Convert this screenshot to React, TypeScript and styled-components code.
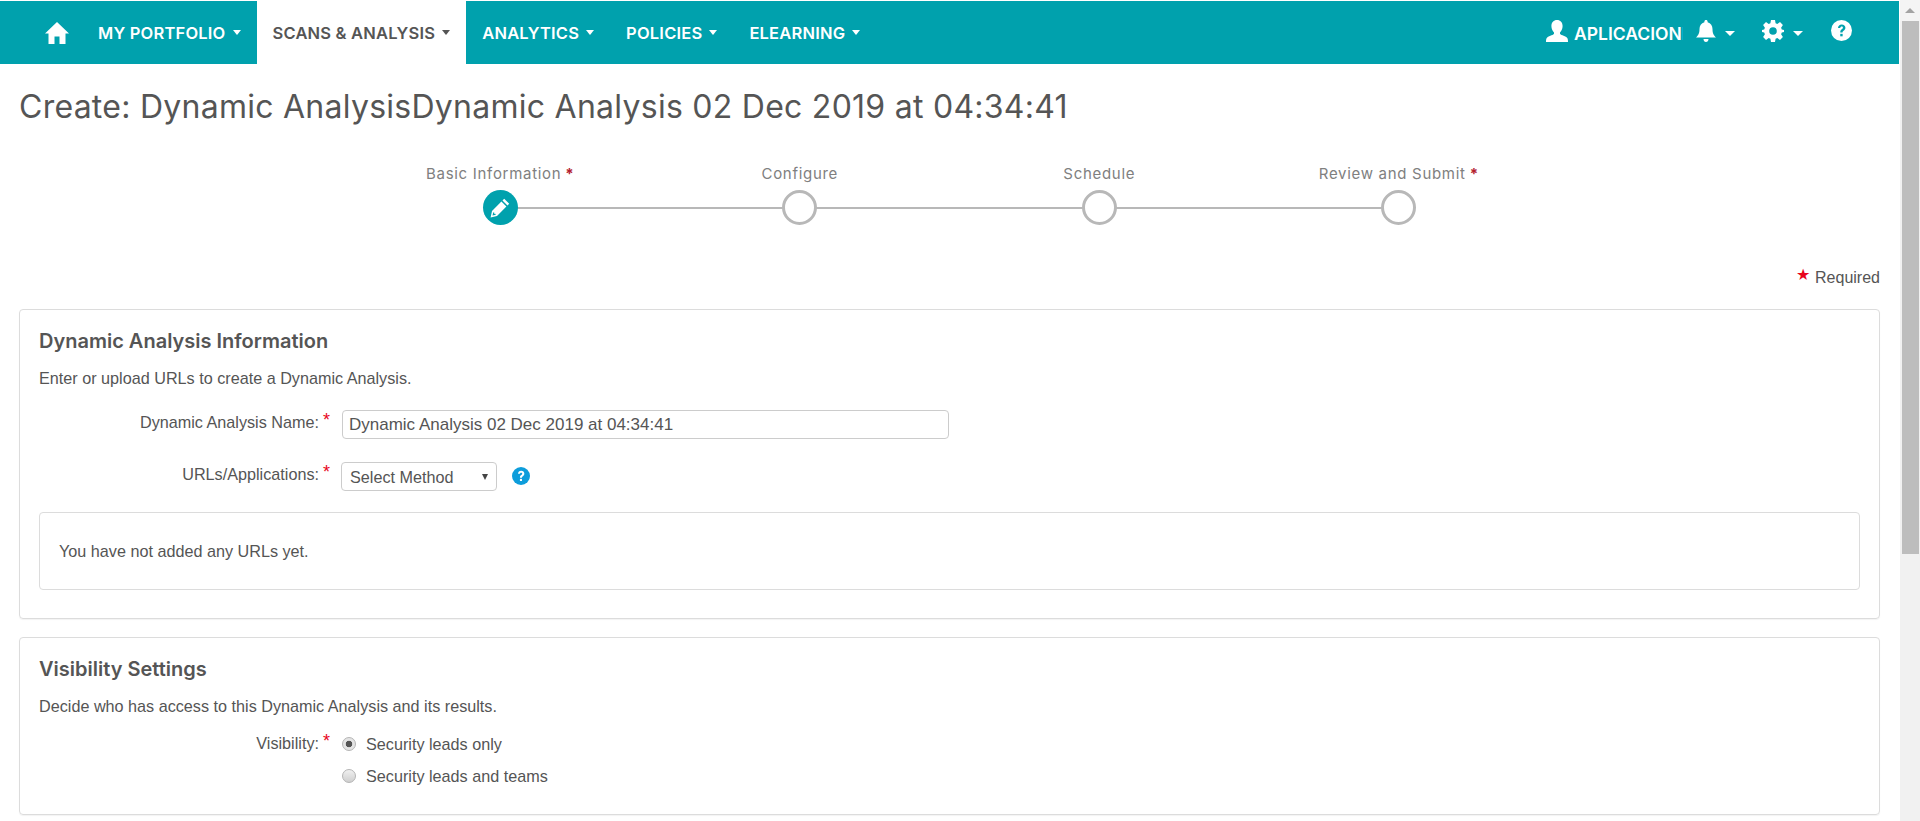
import React from "react";
import styled, { createGlobalStyle } from "styled-components";

const Global = createGlobalStyle`
  html, body { margin: 0; padding: 0; height: 821px; overflow: hidden; background: #fff; }
  body { font-family: "Liberation Sans", Arial, sans-serif; color: #555; font-size: 16px; }
  * { box-sizing: border-box; }
`;

const Shell = styled.div`
  display: flex;
  width: 1920px;
  height: 821px;
  overflow: hidden;
`;
const Page = styled.div`
  width: 1900px;
  flex: none;
  padding-top: 1px;
`;
const Scrollbar = styled.div`
  width: 20px;
  flex: none;
  background: #f1f1f1;
  display: flex;
  flex-direction: column;
  align-items: center;
`;
const ScrollArrow = styled.div`
  height: 21px;
  width: 100%;
  display: flex;
  align-items: center;
  justify-content: center;
  background: #f4f4f4;
  &::before {
    content: "";
    border-left: 5px solid transparent;
    border-right: 5px solid transparent;
    border-bottom: 5px solid #a3a3a3;
  }
`;
const ScrollThumb = styled.div`
  width: 17px;
  height: 533px;
  background: #bdbdbd;
`;

const Nav = styled.nav`
  height: 63px;
  margin-right: 1px;
  background: #00a1ad;
  display: flex;
  align-items: stretch;
  padding-left: 29px;
  color: #fff;
`;
const NavHome = styled.a`
  display: flex;
  align-items: center;
  padding: 0 13px 0 16px;
  color: #fff;
`;
const NavItem = styled.a<{ $active?: boolean }>`
  display: flex;
  align-items: center;
  padding: 0 16px;
  font-family: Inter, "Liberation Sans", sans-serif;
  font-weight: 600;
  font-size: 16.5px;
  letter-spacing: 0.2px;
  text-transform: uppercase;
  white-space: nowrap;
  color: ${(p) => (p.$active ? "#555" : "#fff")};
  background: ${(p) => (p.$active ? "#fff" : "transparent")};
`;
const Caret = styled.span`
  display: inline-block;
  margin-left: 7px;
  border-top: 5px solid currentColor;
  border-left: 4.5px solid transparent;
  border-right: 4.5px solid transparent;
`;
const NavRight = styled.div`
  margin-left: auto;
  display: flex;
  align-items: center;
  padding: 0 47px 4px 0;
`;
const UserName = styled.span`
  display: block;
  width: 109px;
  overflow: hidden;
  white-space: nowrap;
  margin-left: 6px;
  padding-top: 5px;
  font-family: Inter, "Liberation Sans", sans-serif;
  font-weight: 600;
  font-size: 17.5px;
`;
const NavTool = styled.span<{ $gap: number }>`
  display: flex;
  align-items: center;
  margin-left: ${(p) => p.$gap}px;
`;
const ToolCaret = styled(Caret)`
  margin-left: 9px;
  margin-top: 6px;
  border-left-width: 5px;
  border-right-width: 5px;
`;

const Content = styled.main`
  padding: 0 20px 0 19px;
`;
const Title = styled.h1`
  margin: 0;
  padding-top: 24px;
  height: 83px;
  font-family: Inter, "Liberation Sans", sans-serif;
  font-weight: 400;
  font-size: 32px;
  line-height: 38px;
  letter-spacing: 0.26px;
  color: #555;
  white-space: nowrap;
`;
const Stepper = styled.ol`
  list-style: none;
  margin: 0;
  padding: 0;
  display: flex;
  justify-content: center;
  height: 121px;
`;
const Step = styled.li`
  position: relative;
  width: 299.5px;
  display: flex;
  flex-direction: column;
  align-items: center;
  padding-top: 17px;
  &:not(:last-child)::after {
    content: "";
    position: absolute;
    top: 60px;
    left: 50%;
    width: 100%;
    height: 2px;
    background: #b8b8b8;
  }
`;
const StepLabel = styled.div`
  font-family: Inter, "Liberation Sans", sans-serif;
  font-size: 15px;
  line-height: 20px;
  letter-spacing: 0.7px;
  color: #808080;
  white-space: nowrap;
`;
const StepStar = styled.span`
  color: #b3202e;
  font-weight: 700;
  margin-left: 4px;
`;
const StepCircle = styled.div<{ $active?: boolean }>`
  position: relative;
  z-index: 1;
  margin-top: 6px;
  width: 35px;
  height: 35px;
  border-radius: 50%;
  background: ${(p) => (p.$active ? "#00a1ad" : "#fff")};
  border: ${(p) => (p.$active ? "none" : "3px solid #b8b8b8")};
  display: flex;
  align-items: center;
  justify-content: center;
  color: #fff;
`;
const RequiredNote = styled.div`
  height: 41px;
  display: flex;
  justify-content: flex-end;
  align-items: flex-start;
  font-size: 16px;
  line-height: 19px;
  color: #555;
`;
const RedStar = styled.span`
  color: #e8051c;
  font-size: 16px;
  margin-right: 5px;
  line-height: 14px;
`;
const Card = styled.section<{ $h: number }>`
  height: ${(p) => p.$h}px;
  border: 1px solid #dcdcdc;
  border-radius: 4px;
  padding: 0 19px;
  margin-bottom: 18px;
  box-shadow: 0 1px 1px rgba(0, 0, 0, 0.05);
`;
const CardTitle = styled.h2`
  margin: 0;
  padding-top: 20px;
  font-family: Inter, "Liberation Sans", sans-serif;
  font-weight: 600;
  font-size: 20px;
  line-height: 22px;
  color: #555;
`;
const CardDesc = styled.p`
  margin: 16px 0 0;
  font-size: 16.2px;
  line-height: 20px;
  color: #555;
`;
const FormRow = styled.div<{ $mt: number }>`
  display: flex;
  align-items: flex-start;
  margin-top: ${(p) => p.$mt}px;
`;
const Label = styled.label<{ $offset: number }>`
  width: 296px;
  flex: none;
  padding-right: 5px;
  margin-top: ${(p) => p.$offset}px;
  text-align: right;
  font-size: 16.2px;
  line-height: 20px;
  color: #555;
  white-space: nowrap;
`;
const Star = styled.span`
  color: #e8051c;
  font-size: 18px;
  margin-left: 4px;
  position: relative;
  top: -2px;
`;
const TextInput = styled.input`
  margin-left: 7px;
  width: 607px;
  height: 29px;
  border: 1px solid #ccc;
  border-radius: 4px;
  padding: 0 6px;
  font: 17px "Liberation Sans", Arial, sans-serif;
  color: #555;
  background: #fff;
  outline: none;
`;
const SelectWrap = styled.div`
  position: relative;
  margin-left: 6px;
  width: 156px;
  &::after {
    content: "";
    position: absolute;
    right: 9px;
    top: 12px;
    border-top: 6px solid #444;
    border-left: 3px solid transparent;
    border-right: 3px solid transparent;
  }
`;
const Select = styled.select`
  appearance: none;
  width: 100%;
  height: 29px;
  border: 1px solid #ccc;
  border-radius: 4px;
  padding: 0 8px;
  font: 16.2px "Liberation Sans", Arial, sans-serif;
  color: #555;
  background: #fff;
`;
const HelpButton = styled.span`
  display: flex;
  align-items: center;
  height: 27px;
  margin-left: 15px;
  color: #0d9ddb;
`;
const EmptyBox = styled.div`
  margin-top: 21px;
  height: 78px;
  border: 1px solid #dcdcdc;
  border-radius: 4px;
  padding: 28px 19px 0;
  font-size: 16.2px;
  line-height: 20px;
  color: #555;
`;
const RadioGroup = styled.div`
  margin-left: 7px;
  display: flex;
  flex-direction: column;
  gap: 12px;
`;
const RadioRow = styled.label`
  display: flex;
  align-items: center;
  height: 20px;
  font-size: 16.2px;
  color: #555;
`;
const Radio = styled.input`
  appearance: none;
  margin: 0 10px 0 0;
  width: 14px;
  height: 14px;
  border-radius: 50%;
  border: 1px solid #b4b4b4;
  background: linear-gradient(#f0f0f0, #cfcfcf);
  &:checked {
    background: radial-gradient(circle, #555 0 3px, #e4e4e4 3.6px);
  }
`;

const HomeIcon = () => (
  <svg width="24" height="22" viewBox="0 0 24 22" fill="currentColor">
    <path d="M12 0 L24 11.5 L20.5 11.5 L20.5 22 L14.5 22 L14.5 14.5 L9.5 14.5 L9.5 22 L3.5 22 L3.5 11.5 L0 11.5 Z" />
  </svg>
);
const UserIcon = () => (
  <svg width="22" height="22" viewBox="0 0 22 22" fill="currentColor">
    <path d="M11 0c3.4 0 5.6 2.4 5.6 6 0 2.6-1.2 5-2.6 6.4v1.4c0 1 4.5 1.900 6.800 3.700 1 .8 1.200 2.300 1.200 4.500H0c0-2.200.2-3.700 1.200-4.500C3.500 15.700 8 14.800 8 13.800v-1.400C6.600 11 5.400 8.600 5.400 6 5.400 2.400 7.600 0 11 0z" />
  </svg>
);
const BellIcon = () => (
  <svg width="20" height="22" viewBox="0 0 20 22" fill="currentColor">
    <path d="M10 0c1 0 1.600.6 1.600 1.500v.7C14.800 2.900 16.500 5.600 16.500 9c0 4.500 1.200 6.200 3.500 8.500H0C2.300 15.200 3.500 13.500 3.500 9c0-3.400 1.700-6.100 4.900-6.800v-.7C8.400.6 9 0 10 0zM7.500 19h5c0 1.700-1.100 3-2.500 3s-2.500-1.300-2.500-3z" />
  </svg>
);
const GearIcon = () => (
  <svg width="22" height="22" viewBox="0 0 22 22" fill="currentColor">
    <path
      fillRule="evenodd"
      d="M9 0h4l.6 3.200 1.700.7L18 2.100l2.900 2.900-1.800 2.700.7 1.700L22 10v2l-2.200.6-.7 1.700 1.800 2.700-2.900 2.900-2.700-1.800-1.700.7L13 22H9l-.6-3.200-1.700-.7L4 19.900 1.100 17l1.800-2.700-.7-1.700L0 12v-2l2.200-.6.700-1.700L1.100 5 4 2.100l2.700 1.800 1.700-.7L9 0zm2 7.200a3.800 3.800 0 100 7.600 3.800 3.800 0 000-7.600z"
    />
  </svg>
);
const QuestionIcon = ({ size, color }: { size: number; color: string }) => (
  <svg width={size} height={size} viewBox="0 0 22 22">
    <circle cx="11" cy="11" r="11" fill="currentColor" />
    <path
      d="M7.300 8.400C7.500 6 9 4.700 11.200 4.700c2.300 0 3.900 1.400 3.900 3.400 0 1.600-.9 2.400-1.900 3.100-.8.600-1.100 1-1.100 1.900H9.700c0-1.700.5-2.500 1.600-3.300.8-.6 1.200-1 1.200-1.600 0-.8-.5-1.300-1.300-1.300-.9 0-1.400.6-1.500 1.500H7.300z"
      fill={color}
    />
    <rect x="9.700" y="14.500" width="2.500" height="2.600" fill={color} />
  </svg>
);
const PencilIcon = () => (
  <svg width="20" height="20" viewBox="0 0 20 20" fill="currentColor">
    <path d="M14.200 0.800l5 5-1.700 1.700-5-5zM11.400 3.600l5 5L7 18 .6 19.400 2 13zM3.300 14.200l-.8 3.300 3.300-.8-.4-.9-1.200.2.200-1.300z" fillRule="evenodd" />
  </svg>
);

const NAV = [
  { label: "My Portfolio" },
  { label: "Scans & Analysis", active: true },
  { label: "Analytics" },
  { label: "Policies" },
  { label: "eLearning" },
];
const STEPS = [
  { label: "Basic Information", star: true, active: true },
  { label: "Configure" },
  { label: "Schedule" },
  { label: "Review and Submit", star: true },
];

export default function App() {
  return (
    <Shell>
      <Global />
      <Page>
        <Nav>
          <NavHome>
            <HomeIcon />
          </NavHome>
          {NAV.map((n) => (
            <NavItem key={n.label} $active={n.active}>
              {n.label}
              <Caret />
            </NavItem>
          ))}
          <NavRight>
            <UserIcon />
            <UserName>APLICACIONES</UserName>
            <NavTool $gap={13}>
              <BellIcon />
              <ToolCaret />
            </NavTool>
            <NavTool $gap={27}>
              <GearIcon />
              <ToolCaret />
            </NavTool>
            <NavTool $gap={28}>
              <QuestionIcon size={21} color="#00a1ad" />
            </NavTool>
          </NavRight>
        </Nav>
        <Content>
          <Title>Create: Dynamic AnalysisDynamic Analysis 02 Dec 2019 at 04:34:41</Title>
          <Stepper>
            {STEPS.map((s) => (
              <Step key={s.label}>
                <StepLabel>
                  {s.label}
                  {s.star && <StepStar>*</StepStar>}
                </StepLabel>
                <StepCircle $active={s.active}>{s.active && <PencilIcon />}</StepCircle>
              </Step>
            ))}
          </Stepper>
          <RequiredNote>
            <RedStar>★</RedStar>Required
          </RequiredNote>
          <Card $h={310}>
            <CardTitle>Dynamic Analysis Information</CardTitle>
            <CardDesc>Enter or upload URLs to create a Dynamic Analysis.</CardDesc>
            <FormRow $mt={22}>
              <Label $offset={2}>
                Dynamic Analysis Name:<Star>*</Star>
              </Label>
              <TextInput readOnly value="Dynamic Analysis 02 Dec 2019 at 04:34:41" />
            </FormRow>
            <FormRow $mt={23}>
              <Label $offset={2}>
                URLs/Applications:<Star>*</Star>
              </Label>
              <SelectWrap>
                <Select defaultValue="m">
                  <option value="m">Select Method</option>
                </Select>
              </SelectWrap>
              <HelpButton>
                <QuestionIcon size={18} color="#fff" />
              </HelpButton>
            </FormRow>
            <EmptyBox>You have not added any URLs yet.</EmptyBox>
          </Card>
          <Card $h={178}>
            <CardTitle>Visibility Settings</CardTitle>
            <CardDesc>Decide who has access to this Dynamic Analysis and its results.</CardDesc>
            <FormRow $mt={18}>
              <Label $offset={-1}>
                Visibility:<Star>*</Star>
              </Label>
              <RadioGroup>
                <RadioRow>
                  <Radio type="radio" name="vis" defaultChecked />
                  Security leads only
                </RadioRow>
                <RadioRow>
                  <Radio type="radio" name="vis" />
                  Security leads and teams
                </RadioRow>
              </RadioGroup>
            </FormRow>
          </Card>
        </Content>
      </Page>
      <Scrollbar>
        <ScrollArrow />
        <ScrollThumb />
      </Scrollbar>
    </Shell>
  );
}
